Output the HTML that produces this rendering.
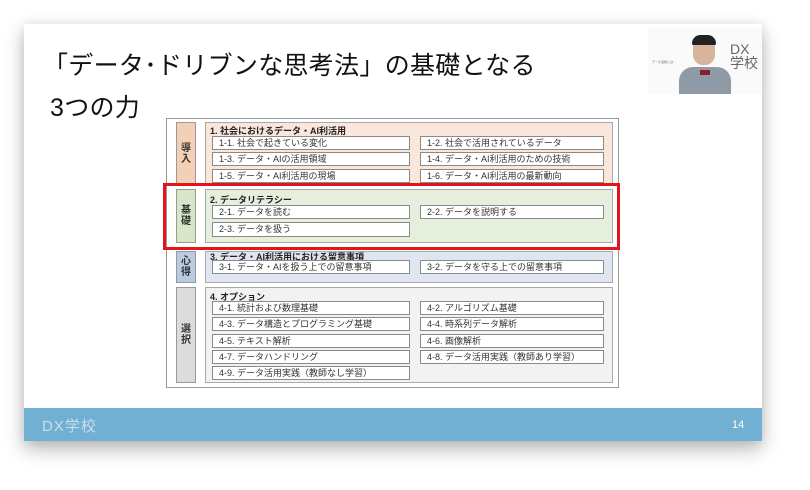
<!DOCTYPE html>
<html><head><meta charset="utf-8"><style>
*{margin:0;padding:0;box-sizing:border-box}
body{width:810px;height:490px;background:#fff;position:relative;overflow:hidden;font-family:"Liberation Sans","Noto Sans CJK JP",sans-serif}
.slide{position:absolute;left:24px;top:24px;width:738px;height:417px;background:#fff;box-shadow:0 8px 18px rgba(0,0,0,.28),0 0 10px rgba(0,0,0,.08)}
.t{position:absolute;left:50px;font-size:25px;color:#111;white-space:nowrap;letter-spacing:.3px}
.foot{position:absolute;left:24px;top:408px;width:738px;height:33px;background:#72b0d3}
.a{position:absolute}
.box{position:absolute;border:1px solid #8a8a8a;background:#fff;font-size:9px;color:#333;padding-left:6px;line-height:12px;white-space:nowrap}
.lab{position:absolute;left:176px;width:20px;border:1px solid #999;font-size:10px;font-weight:bold;color:#333;display:flex;align-items:center;justify-content:center;text-align:center;line-height:11px}
.sec{position:absolute;left:205px;width:408px;border:1px solid #aaa}
.h{position:absolute;left:210px;font-size:9px;font-weight:bold;color:#222;white-space:nowrap}
</style></head><body>
<div class="slide"></div>
<div class="t" style="top:46px;left:43px">「データ･ドリブンな思考法」の基礎となる</div>
<div class="t" style="top:88px">3つの力</div>
<div class="a" style="left:648px;top:28px;width:114px;height:66px;background:#fafafa"></div>
<div class="a" style="left:652px;top:60px;font-size:3px;color:#666">データ活用とは…</div>
<div class="a" style="left:679px;top:67px;width:52px;height:27px;background:#8e9aa6;border-radius:14px 14px 0 0"></div>
<div class="a" style="left:693px;top:37px;width:22px;height:28px;background:#d9b49c;border-radius:10px"></div>
<div class="a" style="left:692px;top:35px;width:24px;height:10px;background:#222;border-radius:10px 10px 2px 2px"></div>
<div class="a" style="left:700px;top:70px;width:10px;height:5px;background:#8c1e2c"></div>
<div class="a" style="left:730px;top:42px;font-size:14px;color:#666;line-height:14px">DX<br>学校</div>

<div class="a" style="left:166px;top:118px;width:453px;height:270px;border:1px solid #999;background:#fff"></div>
<div class="lab" style="top:122px;height:63px;background:#f3cfb6">導<br>入</div>
<div class="sec" style="top:122px;height:64px;background:#f9e7dc"></div>
<div class="h" style="top:124px">1. 社会におけるデータ・AI利活用</div>
<div class="box" style="left:212px;top:136px;width:198px;height:14px">1-1. 社会で起きている変化</div>
<div class="box" style="left:420px;top:136px;width:184px;height:14px">1-2. 社会で活用されているデータ</div>
<div class="box" style="left:212px;top:152px;width:198px;height:14px">1-3. データ・AIの活用領域</div>
<div class="box" style="left:420px;top:152px;width:184px;height:14px">1-4. データ・AI利活用のための技術</div>
<div class="box" style="left:212px;top:169px;width:198px;height:14px">1-5. データ・AI利活用の現場</div>
<div class="box" style="left:420px;top:169px;width:184px;height:14px">1-6. データ・AI利活用の最新動向</div>

<div class="lab" style="top:189px;height:54px;background:#d7e6c9">基<br>礎</div>
<div class="sec" style="top:189px;height:54px;background:#e6efdd"></div>
<div class="h" style="top:193px">2. データリテラシー</div>
<div class="box" style="left:212px;top:205px;width:198px;height:14px">2-1. データを読む</div>
<div class="box" style="left:420px;top:205px;width:184px;height:14px">2-2. データを説明する</div>
<div class="box" style="left:212px;top:222px;width:198px;height:15px">2-3. データを扱う</div>
<div class="a" style="left:163px;top:183px;width:457px;height:67px;border:3.5px solid #e3141b"></div>

<div class="lab" style="top:251px;height:32px;background:#b9cbe3">心<br>得</div>
<div class="sec" style="top:251px;height:32px;background:#dfe6ef"></div>
<div class="h" style="top:250px">3. データ・AI利活用における留意事項</div>
<div class="box" style="left:212px;top:260px;width:198px;height:14px">3-1. データ・AIを扱う上での留意事項</div>
<div class="box" style="left:420px;top:260px;width:184px;height:14px">3-2. データを守る上での留意事項</div>

<div class="lab" style="top:287px;height:96px;background:#dcdcdc">選<br>択</div>
<div class="sec" style="top:287px;height:96px;background:#f2f2f2"></div>
<div class="h" style="top:290px">4. オプション</div>
<div class="box" style="left:212px;top:301px;width:198px;height:14px">4-1. 統計および数理基礎</div>
<div class="box" style="left:420px;top:301px;width:184px;height:14px">4-2. アルゴリズム基礎</div>
<div class="box" style="left:212px;top:317px;width:198px;height:14px">4-3. データ構造とプログラミング基礎</div>
<div class="box" style="left:420px;top:317px;width:184px;height:14px">4-4. 時系列データ解析</div>
<div class="box" style="left:212px;top:334px;width:198px;height:14px">4-5. テキスト解析</div>
<div class="box" style="left:420px;top:334px;width:184px;height:14px">4-6. 画像解析</div>
<div class="box" style="left:212px;top:350px;width:198px;height:14px">4-7. データハンドリング</div>
<div class="box" style="left:420px;top:350px;width:184px;height:14px">4-8. データ活用実践（教師あり学習）</div>
<div class="box" style="left:212px;top:366px;width:198px;height:14px">4-9. データ活用実践（教師なし学習）</div>

<div class="foot"></div>
<div class="a" style="left:42px;top:415px;font-size:15px;color:rgba(255,255,255,.6);letter-spacing:1px">DX学校</div>
<div class="a" style="left:732px;top:419px;font-size:11px;color:#fff">14</div>
</body></html>
